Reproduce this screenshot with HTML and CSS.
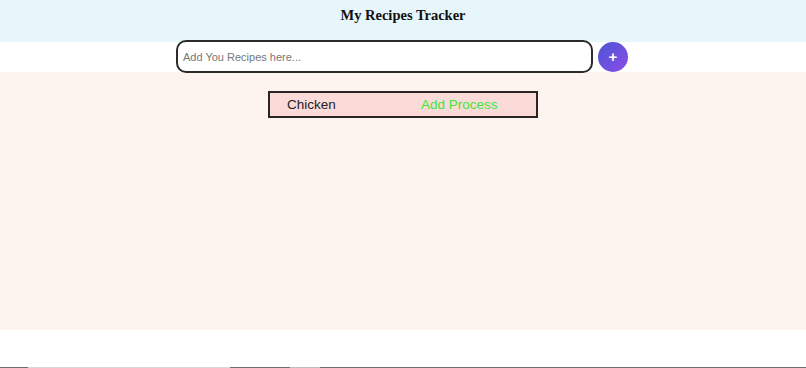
FILE: index.html
```html
<!DOCTYPE html>
<html lang="en">
<head>
    <meta charset="UTF-8">
    <meta name="viewport" content="width=device-width, initial-scale=1.0">
    <title>My Recipes Tracker</title>
    <link rel="stylesheet" href="styles.css">
</head>
<body>
    <header class="header">
        <h1>My Recipes Tracker</h1>
    </header>

    <!-- Add recipe form -->
    <div class="add-bar">
        <form class="add-form">
            <input type="text" class="recipe-input" placeholder="Add You Recipes here...">
            <button type="button" class="add-btn">+</button>
        </form>
    </div>

    <!-- Recipes list -->
    <main class="recipes">
        <div class="recipe-card">
            <span class="recipe-name">Chicken</span>
            <span class="recipe-action">Add Process</span>
        </div>
    </main>

    <div class="footer-space"></div>
    <div class="bottom-line">
        <span class="seg seg-a"></span>
        <span class="seg seg-b"></span>
    </div>
</body>
</html>
```

FILE: styles.css
```css
* {
    margin: 0;
    padding: 0;
    box-sizing: border-box;
}

body {
    font-family: 'Liberation Sans', Arial, sans-serif;
    background: #ffffff;
    height: 368px;
    overflow: hidden;
}

.header {
    background: #e7f6fb;
    height: 42px;
    text-align: center;
    padding-top: 7px;
}

.header h1 {
    font-family: 'Liberation Serif', 'Times New Roman', serif;
    font-size: 14.5px;
    font-weight: bold;
    color: #111;
}

.add-bar {
    height: 30px;
    background: #ffffff;
    display: flex;
    justify-content: center;
    align-items: flex-start;
}

.add-form {
    display: flex;
    align-items: center;
    gap: 5px;
    margin-top: -2px;
    margin-left: -2px;
}

.recipe-input {
    width: 417px;
    height: 33px;
    border: 2px solid #2b2b2b;
    border-radius: 10px;
    padding: 0 5px;
    font-family: 'Liberation Sans', Arial, sans-serif;
    font-size: 11px;
    background: #fff;
    outline: none;
}

.recipe-input::placeholder {
    color: #777;
}

.add-btn {
    width: 30px;
    height: 30px;
    border: none;
    border-radius: 50%;
    background: linear-gradient(135deg, #4a56d6, #8d4be6);
    color: #fff;
    font-size: 15px;
    font-weight: bold;
    line-height: 30px;
    font-family: 'Liberation Sans', Arial, sans-serif;
}

.recipes {
    background: #fdf4f0;
    height: 258px;
    padding-top: 19px;
    display: flex;
    flex-direction: column;
    align-items: center;
}

.recipe-card {
    width: 270px;
    height: 27px;
    background: #fadbd8;
    border: 2px solid #2a2424;
    display: flex;
    align-items: center;
    padding-left: 17px;
    font-size: 13.5px;
}

.recipe-name {
    color: #222;
    width: 134px;
}

.recipe-action {
    color: #3ee63a;
}

.footer-space {
    height: 37px;
}

.bottom-line {
    height: 1px;
    background: #707070;
    position: relative;
}

.seg {
    position: absolute;
    top: 0;
    height: 1px;
    background: #d8d8d8;
}

.seg-a {
    left: 28px;
    width: 202px;
}

.seg-b {
    left: 290px;
    width: 30px;
    background: #bdbdbd;
}
```
